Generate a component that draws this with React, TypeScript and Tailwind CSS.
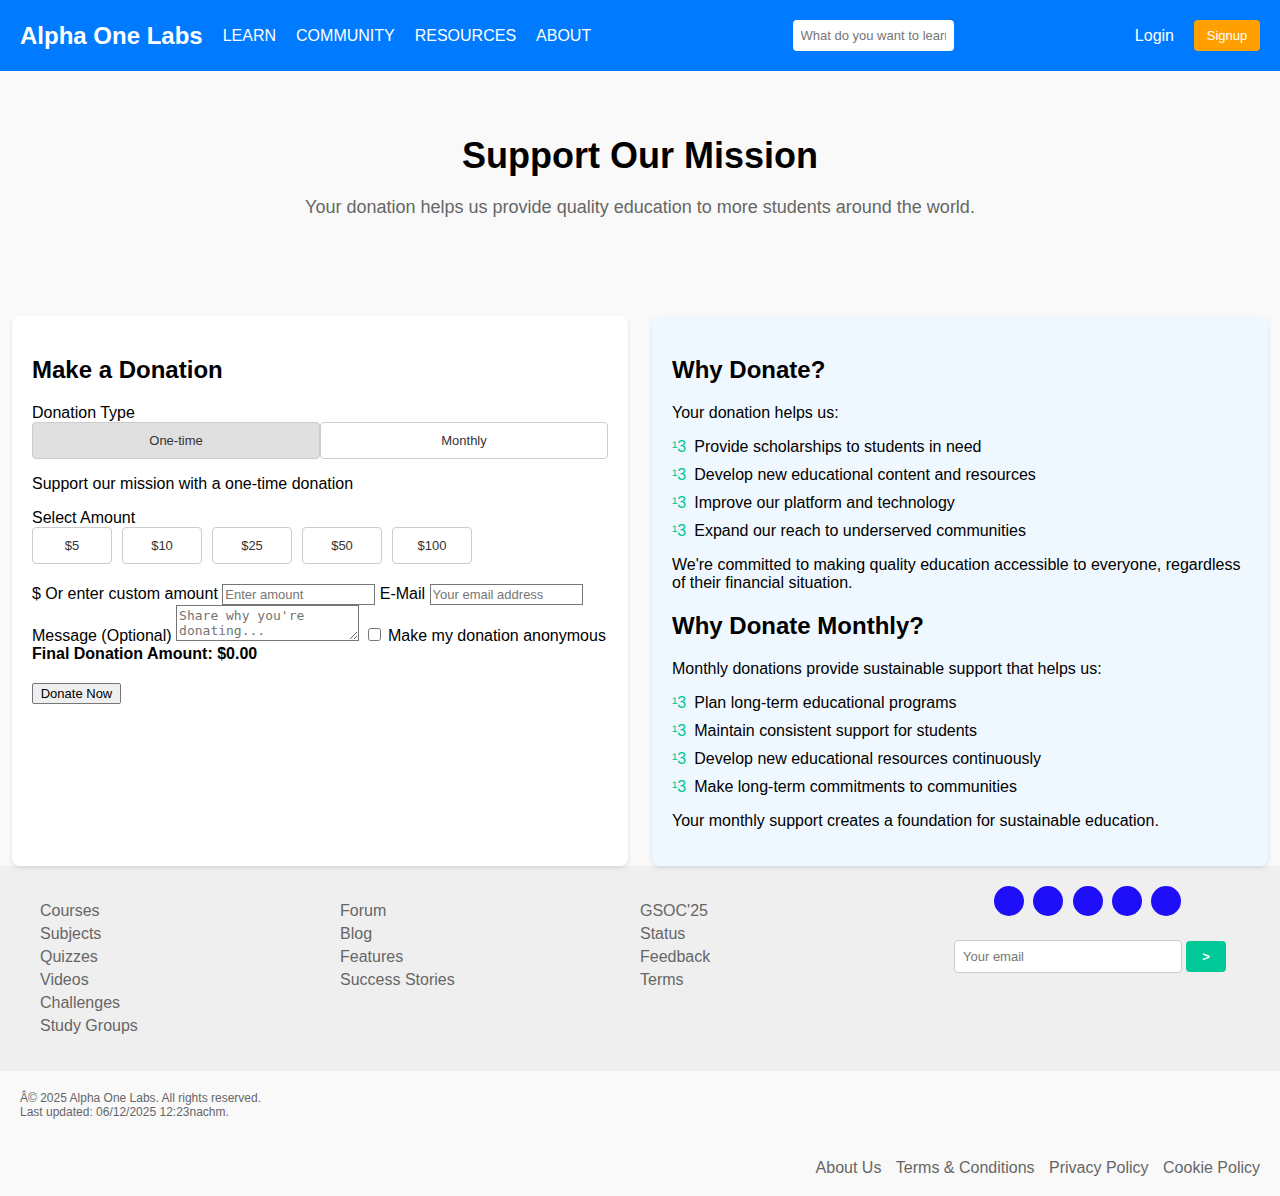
import React, { useState } from "react";

const navLinks = ["LEARN", "COMMUNITY", "RESOURCES", "ABOUT"];
const amounts = [5, 10, 25, 50, 100];

const donationReasons = [
  "Provide scholarships to students in need",
  "Develop new educational content and resources",
  "Improve our platform and technology",
  "Expand our reach to underserved communities",
];

const monthlyReasons = [
  "Plan long-term educational programs",
  "Maintain consistent support for students",
  "Develop new educational resources continuously",
  "Make long-term commitments to communities",
];

const footerColumns = [
  ["Courses", "Subjects", "Quizzes", "Videos", "Challenges", "Study Groups"],
  ["Forum", "Blog", "Features", "Success Stories"],
  ["GSOC'25", "Status", "Feedback", "Terms"],
];

const socialNames = ["Facebook", "Twitter", "Instagram", "LinkedIn", "YouTube"];
const legalLinks = ["About Us", "Terms & Conditions", "Privacy Policy", "Cookie Policy"];

function Header() {
  return (
    <header className="flex items-center justify-between bg-[#007bff] p-5 text-white">
      <div className="flex items-center gap-5 pr-5">
        <a href="#" className="text-2xl leading-7 font-bold">
          Alpha One Labs
        </a>
        <nav className="flex gap-5">
          {navLinks.map((label) => (
            <a key={label} href="#">
              {label}
            </a>
          ))}
        </nav>
      </div>
      <input
        type="text"
        aria-label="Search"
        placeholder="What do you want to learn?"
        className="w-[161px] rounded-[4px] bg-white p-2 text-[13px] leading-[15px] text-black placeholder:text-[#757575]"
      />
      <div className="flex items-center gap-5">
        <a href="#">Login</a>
        <button
          type="button"
          className="w-[66px] rounded-[4px] bg-[#ffa000] py-2 text-[13px] leading-[15px]"
        >
          Signup
        </button>
      </div>
    </header>
  );
}

function Hero() {
  return (
    <section className="px-5 pt-[65px] pb-[98px] text-center">
      <h1 className="text-4xl leading-10 font-bold">Support Our Mission</h1>
      <p className="mt-5 text-lg leading-[22px] text-[#666666]">
        Your donation helps us provide quality education to more students around the world.
      </p>
    </section>
  );
}

function DonationForm() {
  const [monthly, setMonthly] = useState(false);
  const [amount, setAmount] = useState(0);
  const choice = "rounded-[4px] border border-[#cccccc] py-2.5 text-[13px] leading-[15px] text-[#333333]";
  const field =
    "w-[153px] border border-[#767676] bg-white px-0.5 py-px text-[13px] leading-[17px] placeholder:text-[#757575]";

  return (
    <form
      className="rounded-lg bg-white p-5 shadow-[0_2px_4px_rgba(0,0,0,0.1)]"
      onSubmit={(e) => e.preventDefault()}
    >
      <h2 className="my-5 text-2xl leading-7 font-bold">Make a Donation</h2>
      <div id="type-label">Donation Type</div>
      <div role="group" aria-labelledby="type-label" className="flex">
        <button
          type="button"
          onClick={() => setMonthly(false)}
          className={`flex-1 ${choice} ${monthly ? "bg-white" : "bg-[#e0e0e0]"}`}
        >
          One-time
        </button>
        <button
          type="button"
          onClick={() => setMonthly(true)}
          className={`flex-1 ${choice} ${monthly ? "bg-[#e0e0e0]" : "bg-white"}`}
        >
          Monthly
        </button>
      </div>
      <p className="my-4">Support our mission with a {monthly ? "monthly" : "one-time"} donation</p>
      <div id="amount-label">Select Amount</div>
      <div role="group" aria-labelledby="amount-label" className="mb-5 flex flex-wrap gap-2.5">
        {amounts.map((value) => (
          <button
            key={value}
            type="button"
            onClick={() => setAmount(value)}
            className={`w-20 bg-white ${choice}`}
          >
            ${value}
          </button>
        ))}
      </div>
      <div>
        <label htmlFor="custom-amount">$ Or enter custom amount</label>{" "}
        <input
          id="custom-amount"
          type="number"
          placeholder="Enter amount"
          className={field}
          onChange={(e) => setAmount(Number(e.target.value))}
        />{" "}
        <label htmlFor="email">E-Mail</label>{" "}
        <input id="email" type="email" placeholder="Your email address" className={field} />{" "}
        <label htmlFor="message">Message (Optional)</label>{" "}
        <textarea
          id="message"
          rows={2}
          placeholder="Share why you're donating..."
          className="h-9 w-[183px] resize border border-[#767676] bg-white p-0.5 align-baseline font-['DejaVu_Sans_Mono',monospace] text-[13px] leading-[15px] placeholder:text-[#757575]"
        />{" "}
        <input id="anonymous" type="checkbox" className="mr-[3px] ml-1 size-[13px] align-baseline" />{" "}
        <label htmlFor="anonymous">Make my donation anonymous</label>
      </div>
      <div className="font-bold">Final Donation Amount: ${amount.toFixed(2)}</div>
      <button
        type="submit"
        className="mt-5 w-[89px] rounded-[2px] border border-[#767676] bg-[#efefef] py-0.5 text-[13px] leading-[15px]"
      >
        Donate Now
      </button>
    </form>
  );
}

function Reasons({ items }: { items: string[] }) {
  return (
    <ul className="my-4 flex flex-col gap-2.5">
      {items.map((item) => (
        <li key={item} className="flex gap-2">
          <span className="text-[#00c896]">¹3</span>
          {item}
        </li>
      ))}
    </ul>
  );
}

function WhyDonate() {
  return (
    <section className="rounded-lg bg-[#f0f8ff] p-5 shadow-[0_2px_4px_rgba(0,0,0,0.1)]">
      <h2 className="my-5 text-2xl leading-7 font-bold">Why Donate?</h2>
      <p>Your donation helps us:</p>
      <Reasons items={donationReasons} />
      <p>
        We're committed to making quality education accessible to everyone, regardless of their
        financial situation.
      </p>
      <h2 className="my-5 text-2xl leading-7 font-bold">Why Donate Monthly?</h2>
      <p>Monthly donations provide sustainable support that helps us:</p>
      <Reasons items={monthlyReasons} />
      <p className="mb-4">Your monthly support creates a foundation for sustainable education.</p>
    </section>
  );
}

function Footer() {
  return (
    <footer className="text-[#666666]">
      <div className="grid grid-cols-4 bg-[#efefef] px-10 py-5">
        {footerColumns.map((links) => (
          <ul key={links[0]} className="my-4 flex flex-col gap-[5px]">
            {links.map((label) => (
              <li key={label}>
                <a href="#">{label}</a>
              </li>
            ))}
          </ul>
        ))}
        <div className="text-center">
          <div className="mb-5">
            {socialNames.map((name) => (
              <React.Fragment key={name}>
                <a
                  href="#"
                  aria-label={name}
                  className="mr-[5px] inline-block size-[30px] rounded-full bg-[#1e0ff8] align-top"
                />{" "}
              </React.Fragment>
            ))}
          </div>
          <form
            className="flex items-center justify-center gap-1 pt-1"
            onSubmit={(e) => e.preventDefault()}
          >
            <input
              type="email"
              aria-label="Your email"
              placeholder="Your email"
              className="w-[228px] rounded-[4px] border border-[#cccccc] bg-white p-2 text-[13px] leading-[15px] text-black placeholder:text-[#757575]"
            />
            <button
              type="submit"
              className="w-10 rounded-[4px] bg-[#00c896] py-2 text-[13px] leading-[15px] font-bold text-white"
            >
              &gt;
            </button>
          </form>
        </div>
      </div>
      <div className="p-5">
        <p className="text-xs leading-[14px]">
          Â© 2025 Alpha One Labs. All rights reserved.
          <br />
          Last updated: 06/12/2025 12:23nachm.
        </p>
        <nav className="mt-10 text-right">
          {legalLinks.map((label) => (
            <React.Fragment key={label}>
              <a href="#" className="ml-2.5">
                {label}
              </a>{" "}
            </React.Fragment>
          ))}
        </nav>
      </div>
    </footer>
  );
}

export default function App() {
  return (
    <div className="min-h-screen bg-[#f9f9f9] font-['Liberation_Sans',Arial,sans-serif] text-base leading-[18px] text-black">
      <Header />
      <Hero />
      <main className="relative grid grid-cols-2 gap-6 px-3">
        <DonationForm />
        <WhyDonate />
      </main>
      <Footer />
    </div>
  );
}
